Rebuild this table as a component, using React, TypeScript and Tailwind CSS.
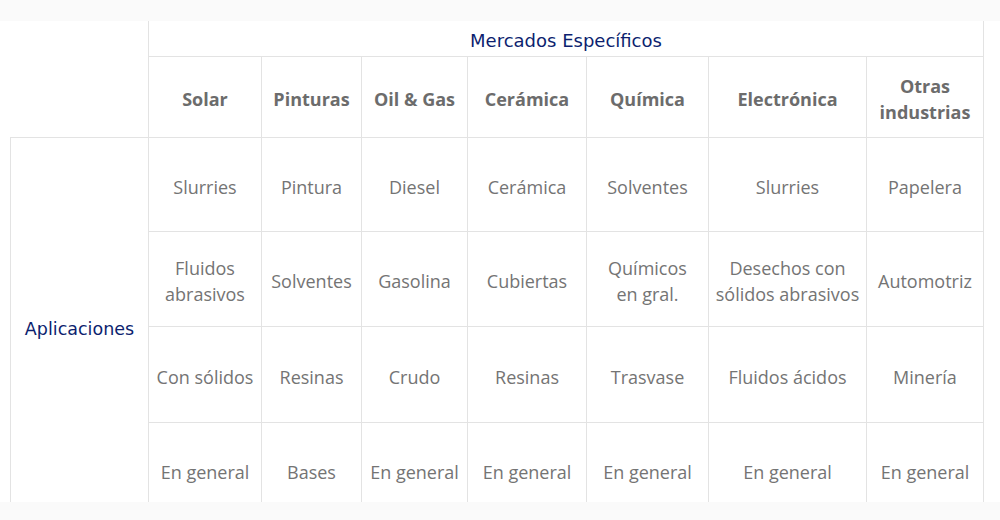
const markets = ["Solar", "Pinturas", "Oil & Gas", "Cerámica", "Química", "Electrónica", "Otras industrias"];

const rows: string[][] = [
  ["Slurries", "Pintura", "Diesel", "Cerámica", "Solventes", "Slurries", "Papelera"],
  ["Fluidos abrasivos", "Solventes", "Gasolina", "Cubiertas", "Químicos\nen gral.", "Desechos con\nsólidos abrasivos", "Automotriz"],
  ["Con sólidos", "Resinas", "Crudo", "Resinas", "Trasvase", "Fluidos ácidos", "Minería"],
  ["En general", "Bases", "En general", "En general", "En general", "En general", "En general"],
];

const sans = { fontFamily: '"Open Sans", sans-serif' };
const navy = { fontFamily: '"DejaVu Sans", sans-serif' };

function Cell({ text, last, bold }: { text: string; last: boolean; bold?: boolean }) {
  return (
    <div
      className={
        "flex items-center justify-center whitespace-pre-line border-l border-t border-[#e3e3e3] px-1 pt-[4px] text-center text-[18px] leading-[26px] " +
        (last ? "border-r " : "") +
        (bold ? "font-bold text-[#6c6c6c]" : "text-[#747474]")
      }
    >
      {text}
    </div>
  );
}

export default function App() {
  return (
    <div className="h-[520px] w-[1000px] overflow-hidden bg-[#fafafa]" style={sans}>
      <div className="mt-[21px] h-[481px] overflow-hidden bg-white pl-[10px]">
        <div className="grid grid-cols-[138px_113px_100px_106px_119px_122px_158px_118px] grid-rows-[35px_81px_94px_95px_96px_95px]">
          <div className="row-span-2" />
          <div
            className="col-span-7 flex items-center justify-center border-x border-[#e3e3e3] pt-[3px] text-[18px] text-[#0d1f6f]"
            style={navy}
          >
            Mercados Específicos
          </div>
          {markets.map((m, i) => (
            <Cell key={m} text={m} bold last={i === markets.length - 1} />
          ))}
          <div
            className="row-span-4 flex items-center justify-center border-l border-t border-[#e3e3e3] pt-[3px] text-[17.5px] text-[#0d1f6f]"
            style={navy}
          >
            Aplicaciones
          </div>
          {rows.map((r, ri) =>
            r.map((t, ci) => <Cell key={ri + "-" + ci} text={t} last={ci === r.length - 1} />)
          )}
        </div>
      </div>
    </div>
  );
}
